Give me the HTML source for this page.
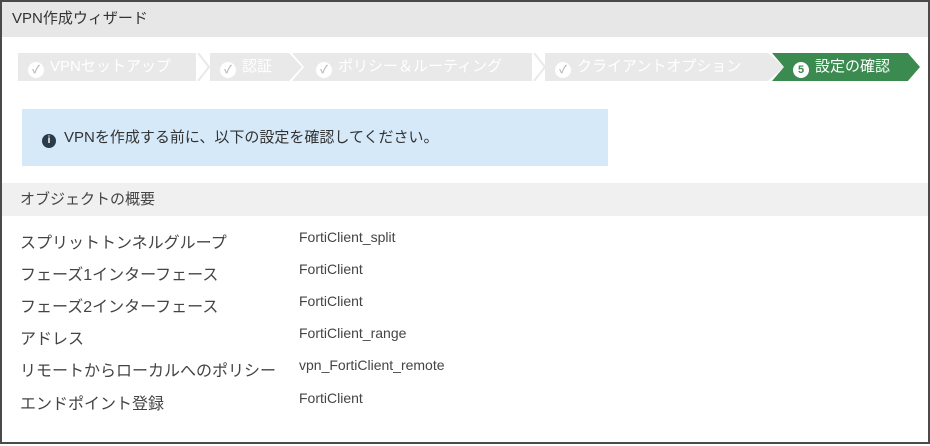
<!DOCTYPE html><html><head><meta charset="utf-8"><style>
*{margin:0;padding:0;box-sizing:border-box}
body{width:930px;height:446px;background:#fff;font-family:"Liberation Sans","Noto Sans CJK JP",sans-serif;position:relative;overflow:hidden}
.frame{position:absolute;left:0;top:0;width:930px;height:444px;border:2px solid #4a4a4a}
.hdr{position:absolute;left:2px;top:2px;width:926px;height:35px;background:#e7e7e7;font-size:15px;color:#333;line-height:34px;padding-left:10px}
.st{position:absolute;top:53px;height:28px;background:#e9e9e9;color:#fff;font-size:15px;line-height:28px;white-space:nowrap;padding-left:10px}
.ck{display:inline-block;width:16px;height:16px;border-radius:50%;background:#fff;color:#bbb;font-size:11px;line-height:16px;text-align:center;vertical-align:-2px;margin-right:6px;font-weight:bold}
.info{position:absolute;left:22px;top:109px;width:586px;height:57px;background:#d6e9f9;font-size:15px;color:#333;line-height:57px;padding-left:20px}
.sec{position:absolute;left:2px;top:183px;width:926px;height:33px;background:#f0f0f0;font-size:15px;color:#444;line-height:33px;padding-left:18px}
.r{position:absolute;left:20px;font-size:16px;color:#444}
.v{position:absolute;left:299px;font-size:14px;color:#444}
</style></head><body>
<div class="frame"></div>
<div class="hdr">VPN作成ウィザード</div>
<div class="st" style="left:18px;width:178px;clip-path:polygon(0 0,100% 0,100% 100%,0 100%)"><span class="ck">✓</span>VPNセットアップ</div>
<div class="st" style="left:197px;width:14px;background:none;padding:0"><svg width="14" height="28"><path d="M1 0 L12 14 L1 28" stroke="#e9e9e9" stroke-width="2" fill="none"/></svg></div>
<div class="st" style="left:210px;width:92px;clip-path:polygon(0 0,86% 0,100% 50%,86% 100%,0 100%)"><span class="ck">✓</span>認証</div>
<div class="st" style="left:292px;width:240px;padding-left:24px;clip-path:polygon(0 0,100% 0,100% 100%,0 100%,12px 50%)"><span class="ck">✓</span>ポリシー＆ルーティング</div>
<div class="st" style="left:533px;width:14px;background:none;padding:0"><svg width="14" height="28"><path d="M1 0 L12 14 L1 28" stroke="#e9e9e9" stroke-width="2" fill="none"/></svg></div>
<div class="st" style="left:545px;width:223px;"><span class="ck">✓</span>クライアントオプション</div>
<div class="st" style="left:768px;width:18px;background:none;padding:0"><svg width="18" height="28"><path d="M0 0 L16 14 L0 28 Z" fill="#e9e9e9"/><path d="M4 0 L18 0 L18 28 L4 28 L16 14 Z" fill="#3b8a4f"/></svg></div>
<div class="st" style="left:785px;width:135px;background:#3b8a4f;padding-left:8px;clip-path:polygon(0 0,91% 0,100% 50%,91% 100%,0 100%)"><span class="ck" style="color:#3b8a4f">5</span>設定の確認</div>
<div class="info"><span style="display:inline-block;width:14px;height:14px;border-radius:50%;background:#2a3b4c;color:#fff;font-size:10px;line-height:14px;text-align:center;font-weight:bold;margin-right:8px;vertical-align:-1px">i</span>VPNを作成する前に、以下の設定を確認してください。</div>
<div class="sec">オブジェクトの概要</div>
<div class="r" style="top:229px">スプリットトンネルグループ</div><div class="v" style="top:229px">FortiClient_split</div>
<div class="r" style="top:261px">フェーズ1インターフェース</div><div class="v" style="top:261px">FortiClient</div>
<div class="r" style="top:293px">フェーズ2インターフェース</div><div class="v" style="top:293px">FortiClient</div>
<div class="r" style="top:325px">アドレス</div><div class="v" style="top:325px">FortiClient_range</div>
<div class="r" style="top:357px">リモートからローカルへのポリシー</div><div class="v" style="top:357px">vpn_FortiClient_remote</div>
<div class="r" style="top:390px">エンドポイント登録</div><div class="v" style="top:390px">FortiClient</div>
</body></html>
